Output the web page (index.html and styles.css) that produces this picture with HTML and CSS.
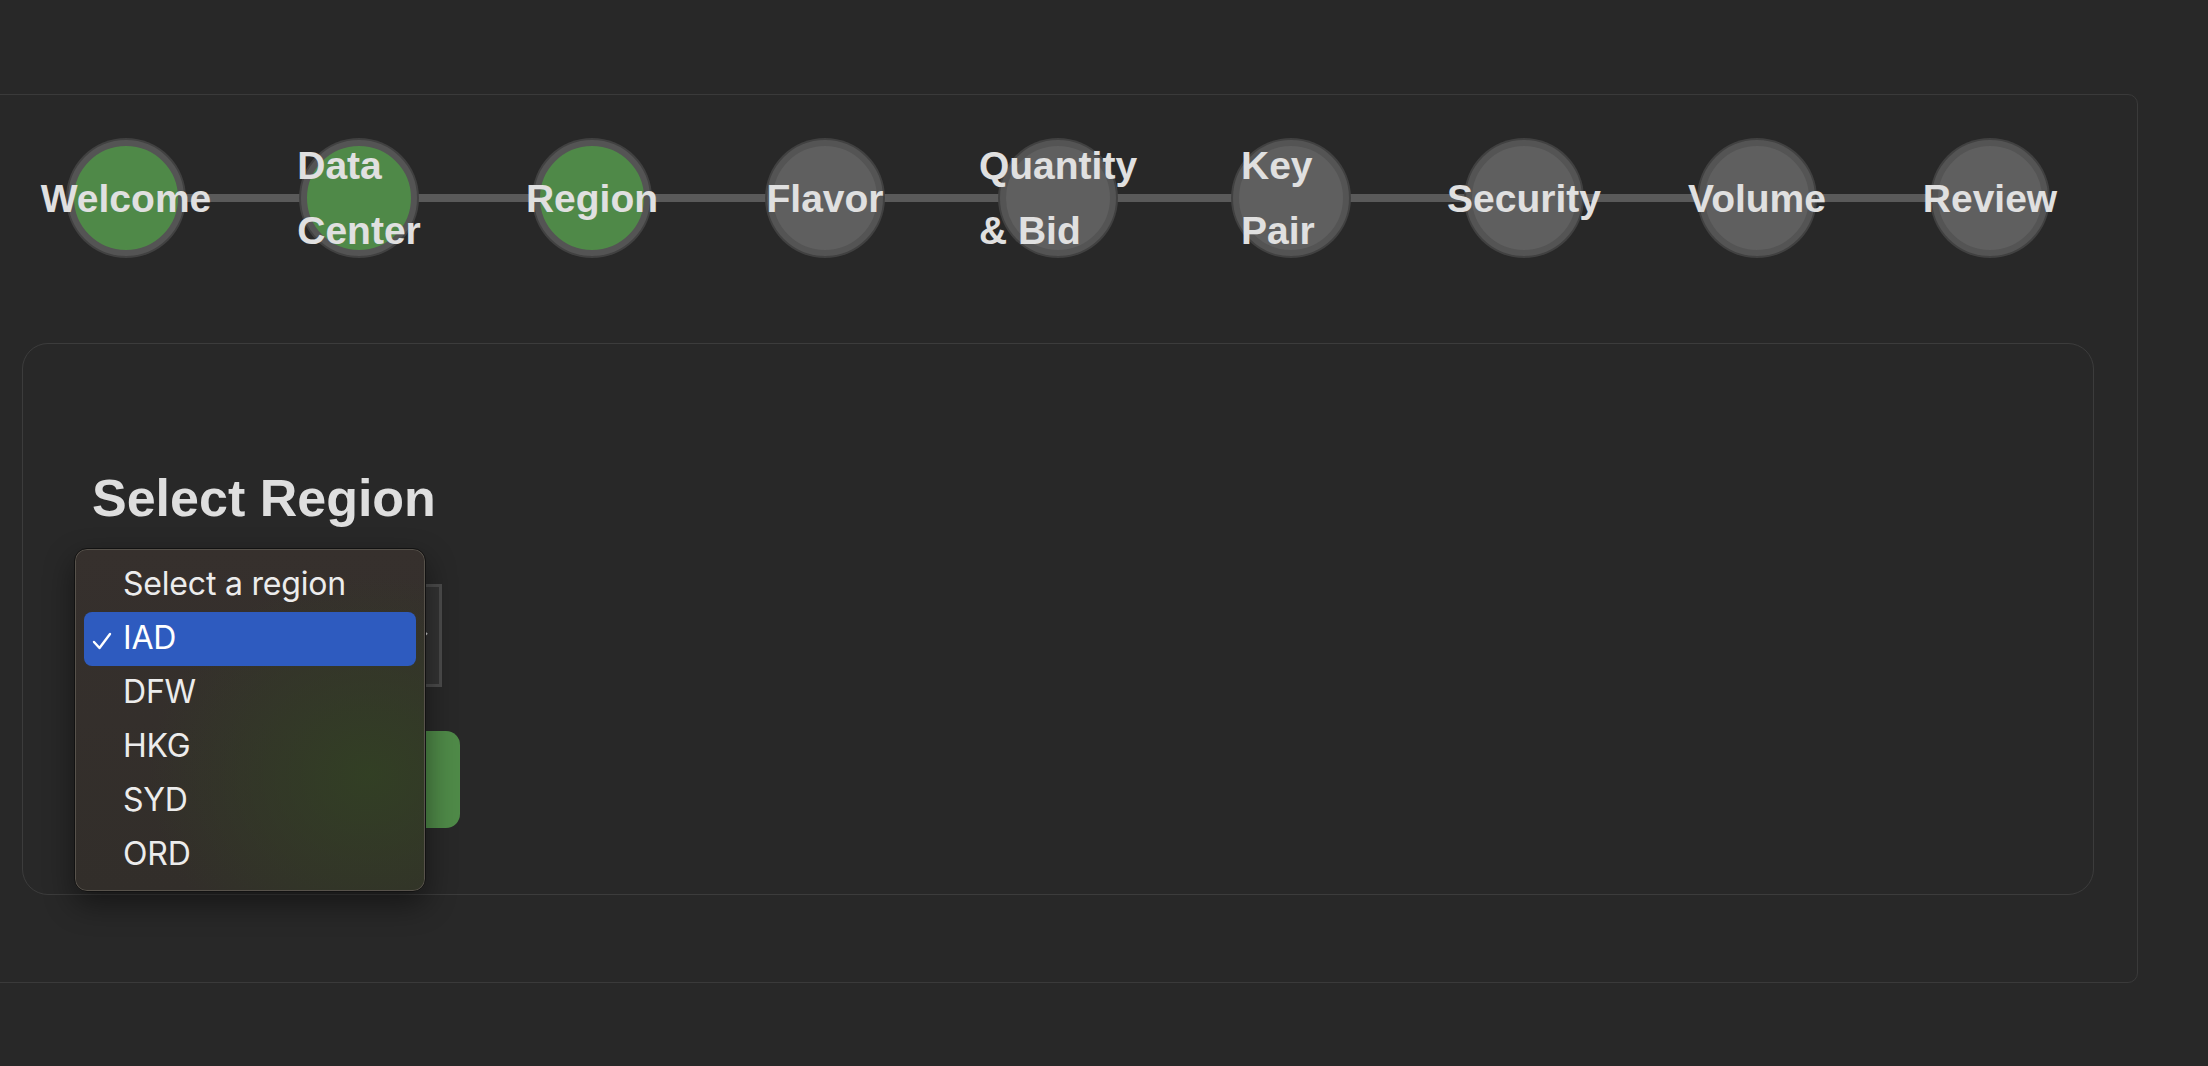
FILE: index.html
```html
<!DOCTYPE html>
<html lang="en">
<head>
<meta charset="utf-8">
<title>Launch Wizard - Select Region</title>
<link rel="stylesheet" href="styles.css">
</head>
<body>
<div class="wizard">
  <div class="stepper">
    <div class="step done"><div class="dot"></div><span class="label">Welcome</span></div>
    <div class="step done"><div class="dot"></div><span class="label">Data Center</span></div>
    <div class="step done"><div class="dot"></div><span class="label">Region</span></div>
    <div class="step"><div class="dot"></div><span class="label">Flavor</span></div>
    <div class="step"><div class="dot"></div><span class="label">Quantity &amp; Bid</span></div>
    <div class="step"><div class="dot"></div><span class="label">Key Pair</span></div>
    <div class="step"><div class="dot"></div><span class="label">Security</span></div>
    <div class="step"><div class="dot"></div><span class="label">Volume</span></div>
    <div class="step"><div class="dot"></div><span class="label">Review</span></div>
  </div>
  <div class="card">
    <h2 class="title">Select Region</h2>
    <div class="field">
      <div class="select">
        <svg class="chev" width="14" height="10" viewBox="0 0 14 10"><path d="M2 2 L7 7 L12 2" fill="none" stroke="#cfcfcf" stroke-width="2"/></svg>
      </div>
      <div class="menu">
        <div class="item">Select a region</div>
        <div class="item active">
          <svg class="check" width="20" height="18" viewBox="0 0 20 18"><path d="M2 10 L7.5 16 L18 2" fill="none" stroke="#ffffff" stroke-width="2.4" stroke-linecap="round" stroke-linejoin="round"/></svg>
          IAD
        </div>
        <div class="item">DFW</div>
        <div class="item">HKG</div>
        <div class="item">SYD</div>
        <div class="item">ORD</div>
      </div>
    </div>
    <button class="next">Next</button>
  </div>
</div>
</body>
</html>
```
FILE: styles.css
```css
html, body {
  margin: 0;
  padding: 0;
  background: #282828;
  overflow: hidden;
}

body {
  font-family: "Liberation Sans", Arial, sans-serif;
  color: #dedede;
}

.wizard {
  margin: 94px 70px 0 -22px;
  border: 1px solid #3a3a3a;
  border-radius: 10px;
  padding: 43px 43px 87px 43px;
}

.stepper {
  position: relative;
  display: flex;
  justify-content: space-between;
  height: 120px;
  margin-bottom: 85px;
}

.stepper::before {
  content: "";
  position: absolute;
  left: 104px;
  right: 104px;
  top: 56px;
  height: 8px;
  background: #5a5a5a;
}

.step {
  position: relative;
  width: 208px;
  height: 120px;
  display: flex;
  justify-content: center;
  align-items: center;
}

.dot {
  position: relative;
  box-sizing: border-box;
  width: 116px;
  height: 116px;
  border-radius: 50%;
  border: 6px solid #545454;
  box-shadow: 0 0 0 2px #414141;
  background: #5f5f5f;
}

.step.done .dot {
  background: #4f8948;
}

.label {
  position: absolute;
  left: 50%;
  top: 50%;
  transform: translate(-50%, -50%);
  width: 100px;
  min-width: min-content;
  font-size: 39px;
  font-weight: bold;
  line-height: 65px;
  color: #e0e0e0;
  text-align: left;
  z-index: 2;
}

.card {
  border: 1px solid #3c3c3c;
  border-radius: 26px;
  padding: 124px 0 66px 69px;
}

.title {
  margin: 0 0 56px;
  font-size: 52px;
  line-height: 60px;
  font-weight: bold;
  color: #dedede;
}

.field {
  position: relative;
  width: 350px;
  margin-bottom: 44px;
}

.select {
  box-sizing: border-box;
  width: 350px;
  height: 103px;
  border: 3px solid #4b4b4b;
  background: #333333;
  display: flex;
  align-items: center;
  justify-content: flex-end;
  padding-right: 10px;
}

.chev {
  display: block;
}

.menu {
  position: absolute;
  left: -18px;
  top: -36px;
  width: 352px;
  box-sizing: border-box;
  padding: 9px 9px;
  border: 1px solid #121212;
  border-radius: 13px;
  background:
    radial-gradient(ellipse 220px 200px at 84% 66%, rgba(50, 64, 36, 0.95), rgba(50, 64, 36, 0) 100%),
    linear-gradient(180deg, #36302d 0%, #322e2a 100%);
  box-shadow: inset 0 0 0 1px #57524b, 0 12px 30px rgba(0, 0, 0, 0.45);
  font-family: Inter, "Noto Sans", sans-serif;
  z-index: 5;
}

.item {
  position: relative;
  height: 54px;
  line-height: 52px;
  padding-left: 39px;
  font-size: 32px;
  color: #ececec;
  border-radius: 8px;
  letter-spacing: -0.2px;
}

.item.active {
  background: #2e5bbf;
  color: #ffffff;
}

.check {
  position: absolute;
  left: 8px;
  top: 20px;
}

.next {
  display: block;
  width: 368px;
  height: 97px;
  border: none;
  border-radius: 14px;
  background: #4f8a48;
  color: #ffffff;
  font-family: "Liberation Sans", Arial, sans-serif;
  font-size: 36px;
  font-weight: bold;
}
```
